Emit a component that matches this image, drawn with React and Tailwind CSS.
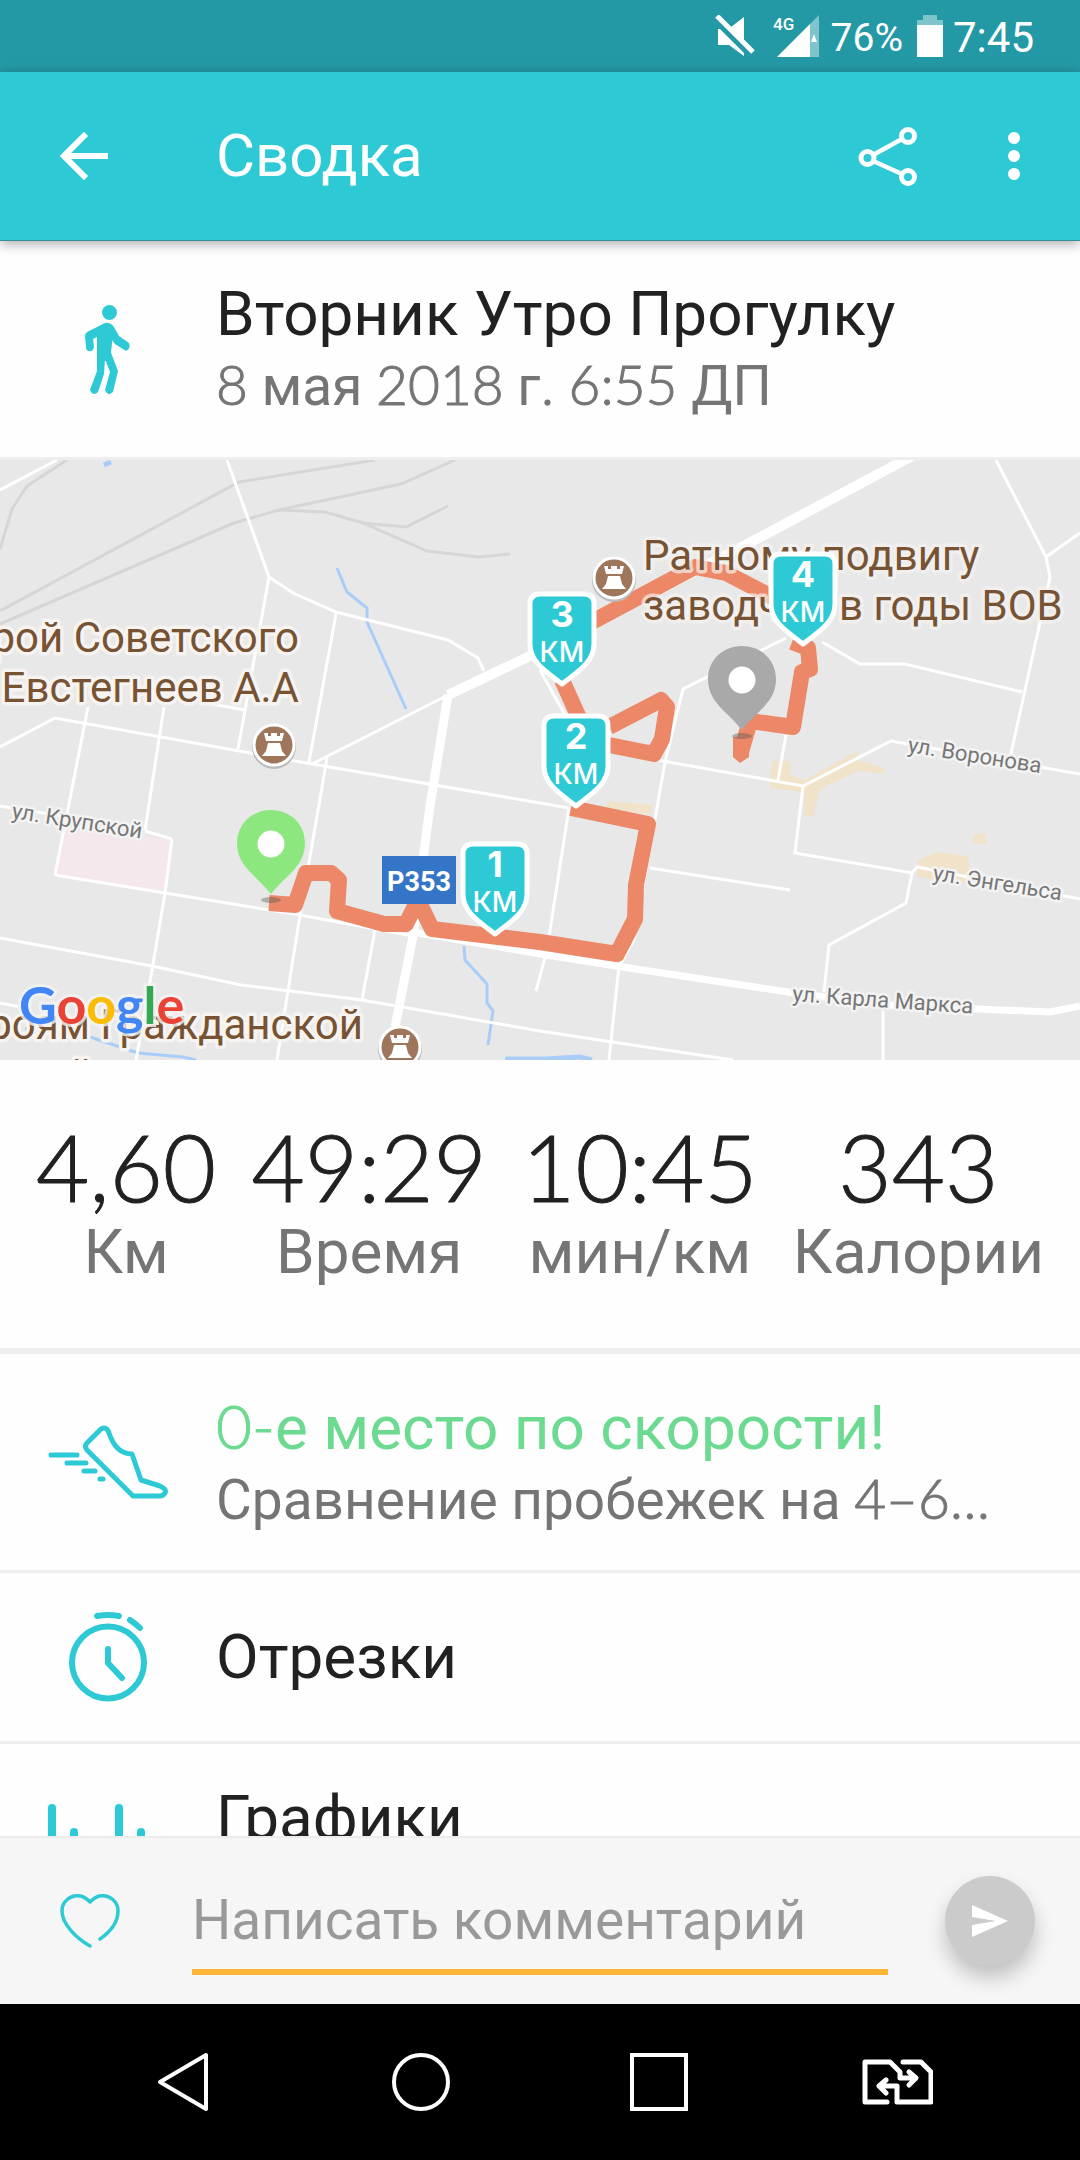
import React from "react";

const TEAL = "#2dcad6";

function StatusBar() {
  return (
    <div className="flex h-[72px] shrink-0 items-center justify-end bg-[#2499a6] pr-[46px] text-white">
      <svg className="mr-[16px] h-[42px] w-[42px]" viewBox="0 0 42 42" fill="#fff" aria-label="Звук выключен">
        <path d="M3 14L3 30H14L29 41V38L5 14Z" />
        <path d="M16 12L29 2V26Z" />
        <path d="M2 1L38 37" stroke="#fff" strokeWidth="5" fill="none" />
      </svg>
      <svg className="mr-3 h-[44px] w-[46px]" viewBox="0 0 46 44" fill="#fff" aria-label="Сигнал 4G">
        <text x="0" y="16" fontFamily="Roboto, sans-serif" fontSize="17" fontWeight="500">4G</text>
        <path d="M46 1V43H37V10Z" opacity=".42" />
        <path d="M4 43L37 10V43Z" />
        <path d="M38 28L41 20L44 28Z" />
      </svg>
      <span className="mr-[14px] mt-1 text-[39px] leading-none">76%</span>
      <svg className="mr-[10px] h-[42px] w-[26px]" viewBox="0 0 26 42" fill="#fff" aria-label="Батарея">
        <path d="M6 0H20V5H26V10H0V5H6Z" opacity=".42" />
        <path d="M0 10H26V42H0Z" />
      </svg>
      <span className="mt-1 text-[42px] leading-none">7:45</span>
    </div>
  );
}

function AppBar() {
  return (
    <header className="relative z-10 flex h-[169px] shrink-0 items-center border-b border-[#348f97] bg-[#2dcad6] text-white shadow-[0_3px_12px_rgba(0,0,0,0.32)]">
      <button aria-label="Назад" className="ml-[60px] mr-[108px]">
        <svg className="h-12 w-12" viewBox="0 0 48 48" fill="none" stroke="#fff" strokeWidth="6">
          <path d="M26 2L4 24L26 46M4 24H48" />
        </svg>
      </button>
      <h1 className="flex-1 text-[60px] leading-none">Сводка</h1>
      <button aria-label="Поделиться" className="mr-[84px]">
        <svg className="h-[60px] w-[60px]" viewBox="0 0 60 60" fill="none" stroke="#fff" strokeWidth="5">
          <circle cx="9.500" cy="32" r="6.500" />
          <circle cx="50" cy="10" r="6.500" />
          <circle cx="50" cy="51" r="6.500" />
          <path d="M15 29L44 13M15 35L44 48" strokeWidth="4.500" />
        </svg>
      </button>
      <button aria-label="Ещё" className="mr-[54px]">
        <svg className="h-[48px] w-6" viewBox="0 0 24 48" fill="#fff">
          <circle cx="12" cy="6" r="6" />
          <circle cx="12" cy="24" r="6" />
          <circle cx="12" cy="42" r="6" />
        </svg>
      </button>
    </header>
  );
}

function Num({ children }) {
  return (
    <span className="font-['Lato',sans-serif] font-light [-webkit-text-stroke:1px_currentColor]">
      {children}
    </span>
  );
}

function IconCell({ children }) {
  return <div className="flex w-[216px] shrink-0 items-center justify-center">{children}</div>;
}

const MARKERS = [
  { n: 3, x: 562, y: 132 },
  { n: 2, x: 576, y: 254 },
  { n: 1, x: 495, y: 382 },
  { n: 4, x: 803, y: 92 },
];

function KmMarker({ n, x, y }) {
  return (
    <g transform={`translate(${x} ${y})`}>
      <path
        d="M-22 2H22Q32 2 32 12V52C32 72 12 82 0 92C-12 82 -32 72 -32 52V12Q-32 2 -22 2Z"
        fill={TEAL}
        stroke="#fff"
        strokeWidth="5"
        strokeLinejoin="round"
      />
      <g fill="#fff" textAnchor="middle" fontFamily="Inter, sans-serif">
        <text x="0" y="35" fontSize="36" fontWeight="700">{n}</text>
        <text x="0" y="70" fontSize="28" fontWeight="500">КМ</text>
      </g>
    </g>
  );
}

function Castle({ x, y }) {
  return (
    <g transform={`translate(${x} ${y})`}>
      <circle cy="2" r="22" fill="#bbb" />
      <circle r="20" fill="#9d765b" stroke="#fff" strokeWidth="3" />
      <path
        d="M-10 -12H-6V-9H-3V-12H3V-9H6V-12H10L8 -4H-8ZM-6 -2H6L8 6L12 11H-12L-8 6Z"
        fill="#fff"
      />
    </g>
  );
}

function Pin({ x, y, color }) {
  return (
    <g transform={`translate(${x} ${y})`}>
      <ellipse cy="56" rx="10" ry="3" fill="#555" opacity=".4" />
      <path d="M0 -34C20 -34 34 -19 34 -1C34 22 16 30 0 50C-16 30 -34 22 -34 -1C-34 -19 -20 -34 0 -34Z" fill={color} />
      <circle r="13.500" fill="#fff" />
    </g>
  );
}

function RouteMap() {
  return (
    <svg className="block h-auto w-full shrink-0" viewBox="0 0 1080 600" role="img" aria-label="Карта маршрута">
      <rect width="1080" height="600" fill="#e8e8e8" />
      <path d="M62 368L172 379L165 431L55 415Z" fill="#f5e8ec" />
      <g fill="#f0e3ca">
        <path d="M772 301H790V315L805 320L846 297L857 291V300L884 308V314L858 311L820 329L814 356H804V332L770 328Z" />
        <path d="M607 341L652 345V354L605 349Z" />
        <path d="M918 400L937 392L968 396L971 416L964 423L917 417Z" />
        <rect x="973" y="374" width="13" height="10" />
      </g>
      <g fill="none" stroke="#d6d6d6" strokeWidth="3">
        <path d="M0 89L12 49L27 26L67 0" />
        <path d="M0 151L239 22L375 0" />
        <path d="M0 164L234 63L279 50L401 24L455 0" />
        <path d="M279 50L325 52L363 63L427 91L479 97L510 94" />
        <path d="M363 63L406 67L448 46" />
      </g>
      <g fill="none" stroke="#a9cdf9" strokeWidth="3">
        <path d="M337 108L347 132L367 148V162L406 249" />
        <path d="M464 486L465 500L487 524V543L493 551L488 585" />
        <path d="M25 569L90 577L138 593L183 597L196 600" />
        <path d="M505 599H545L580 597L592 600M104 5L111 2" strokeWidth="5" />
      </g>
      <g fill="none" stroke="#fff" strokeWidth="3">
        <path d="M0 30L57 0" />
        <path d="M227 0L269 117L293 133L336 152L448 180L478 198L484 211" />
        <path d="M269 117L238 289M336 154L309 302" />
        <path d="M0 287L55 258L312 304L540 343L569 348L547 490L536 531" />
        <path d="M312 304L448 235" />
        <path d="M88 247L55 415M164 247L145 370M207 243L245 250" />
        <path d="M0 346L62 356M145 371L172 379" />
        <path d="M55 415L165 433L300 455L413 476" />
        <path d="M172 379L165 433L150 522L136 600" />
        <path d="M327 298L300 455L277 600" />
        <path d="M0 478L152 506L241 525L362 540L540 571L612 582L733 600" />
        <path d="M375 470L362 540M0 543L30 549" />
        <path d="M996 0L1046 97L1050 117L1010 298M1046 97L1080 73" />
        <path d="M822 182L860 204H905L1022 232" />
        <path d="M786 178L683 229L665 302L647 405L634 480L619 506L609 600" />
        <path d="M657 300L803 326L891 281L1080 314" />
        <path d="M786 275L778 320M803 326L795 393L912 413L917 407L1080 439" />
        <path d="M912 413L906 443L829 485L824 532" />
        <path d="M650 408L790 430M883 551V600M540 210L565 255" />
      </g>
      <g fill="none" stroke="#fff" strokeLinejoin="round">
        <path d="M448 235L530 196L740 88L912 -4" strokeWidth="10" />
        <path d="M448 235L430 346L413 476L395 567" strokeWidth="9" />
        <path d="M413 472L540 494L616 506L788 532L884 545L1050 552L1080 546" strokeWidth="7" />
      </g>
      <g fill="none" stroke="#ec8868" strokeWidth="16" strokeLinejoin="round">
        <path d="M269 443L295 445L306 413H331L339 420L337 451L384 464H406L418 440L432 469L540 482L617 494L635 459L636 425L648 364L571 348" />
        <path d="M609 285L654 294L662 279L667 247L661 240L609 267" />
        <path d="M580 260L562 220M590 163L695 107L726 113L774 138" />
        <path d="M792 182L808 188L810 209L802 212L793 267L750 261L741 292" />
      </g>
      <path d="M733 277H749L749 297L740 303L733 297Z" fill="#ec8868" />

      <Castle x={274} y={285} />
      <Castle x={614} y={118} />
      <Castle x={400} y={587} />

      <g
        fill="#775334"
        stroke="#f6f3f0"
        strokeWidth="7"
        strokeLinejoin="round"
        paintOrder="stroke"
        fontFamily="Roboto, sans-serif"
        fontSize="42"
      >
        <g textAnchor="end">
          <text x="299" y="192">Герой Советского</text>
          <text x="299" y="242">Евстегнеев А.А</text>
          <text x="363" y="579">Героям Гражданской</text>
          <text x="150" y="629">войны</text>
        </g>
        <text x="643" y="110" strokeOpacity=".7">Ратному подвигу</text>
        <text x="643" y="160" strokeOpacity=".7">заводчан в годы ВОВ</text>
      </g>

      <g
        fill="#767676"
        stroke="#f3f3f3"
        strokeWidth="5"
        strokeLinejoin="round"
        paintOrder="stroke"
        fontFamily="Roboto, sans-serif"
        fontSize="22"
      >
        <text transform="translate(11 358) rotate(9)">ул. Крупской</text>
        <text transform="translate(907 292) rotate(9)">ул. Воронова</text>
        <text transform="translate(932 420) rotate(9)">ул. Энгельса</text>
        <text transform="translate(792 541) rotate(4)">ул. Карла Маркса</text>
      </g>

      <rect x="382" y="396" width="74" height="48" fill="#3475c7" />
      <text x="419" y="431" textAnchor="middle" fill="#fff" fontFamily="Roboto, sans-serif" fontSize="27" fontWeight="700">Р353</text>

      <Pin x={271} y={384} color="#8ce77f" />
      <Pin x={742} y={220} color="#a9a9a9" />
      {MARKERS.map((m) => (
        <KmMarker key={m.n} {...m} />
      ))}

      <text
        x="19"
        y="564"
        fontFamily="Lato, sans-serif"
        fontSize="52"
        fontWeight="700"
        stroke="#f3f3f3"
        strokeWidth="6"
        strokeOpacity=".8"
        paintOrder="stroke"
      >
        <tspan fill="#4285f4">G</tspan>
        <tspan fill="#ea4335">o</tspan>
        <tspan fill="#fbbc05">o</tspan>
        <tspan fill="#4285f4">g</tspan>
        <tspan fill="#34a853">l</tspan>
        <tspan fill="#ea4335">e</tspan>
      </text>
    </svg>
  );
}

const STATS = [
  ["4,60", "Км"],
  ["49:29", "Время"],
  ["10:45", "мин/км"],
  ["343", "Калории"],
];

function WalkIcon() {
  return (
    <svg className="h-[90px] w-[46px]" viewBox="0 0 46 90" fill={TEAL} aria-hidden="true">
      <circle cx="24.500" cy="7.500" r="7.500" />
      <path d="M13 32L18 22L28 30L25 56H12Z" />
      <path d="M20 18Q25 17 29 22L34 31L44 38Q46 44 41 46L30 39L27 35L25 45L33 66L28 87Q23 92 20 85L25 67L20 54L19 69L13 87Q8 92 5 85L12 66V32L8 34L9 42Q8 47 4 46Q1 46 1 42L0 31Q0 28 4 26Z" />
    </svg>
  );
}

function ShoeIcon() {
  return (
    <svg className="h-[74px] w-[120px]" viewBox="0 0 120 74" fill="none" stroke={TEAL} strokeWidth="5" strokeLinecap="round" strokeLinejoin="round" aria-hidden="true">
      <path d="M53 4Q59 1 61 8C65 20 72 29 84 29L93 55L112 61Q119 64 117 68Q115 71 112 71H85L39 25Q36 21 39 18Z" />
      <path d="M3 30H29M19 38H38M36 46H47M52 54H55" />
    </svg>
  );
}

function StopwatchIcon() {
  return (
    <svg className="h-[92px] w-[78px]" viewBox="0 0 78 92" fill="none" stroke={TEAL} strokeWidth="6" strokeLinecap="round" strokeLinejoin="round" aria-hidden="true">
      <circle cx="39" cy="51.500" r="36" />
      <path d="M28 5Q39 3 50 5M61 9Q67 13 71 17M39 38V52L53 67" />
    </svg>
  );
}

function ChartIcon() {
  return (
    <svg className="h-[72px] w-[120px]" viewBox="0 0 120 72" fill="none" stroke={TEAL} strokeWidth="8" strokeLinecap="round" aria-hidden="true">
      <path d="M4 26V68M26 50V68M48 58V68M71 26V68M93 50V68M115 58V68" />
    </svg>
  );
}

function CommentBar() {
  return (
    <form className="flex h-[168px] shrink-0 items-center border-t-2 border-[#ececec] bg-[#f6f6f6]" onSubmit={(e) => e.preventDefault()}>
      <button type="button" aria-label="Нравится" className="ml-[60px] mr-[72px]">
        <svg className="h-[54px] w-[60px]" viewBox="0 0 60 54" fill="none" stroke={TEAL} strokeWidth="3.500" strokeLinecap="round" strokeLinejoin="round">
          <path d="M30 52C16 44 2 30 2 17C2 3 19 -4 30 8C41 -4 58 3 58 17C58 28 50 38 40 45" />
        </svg>
      </button>
      <input
        type="text"
        aria-label="Написать комментарий"
        placeholder="Написать комментарий"
        className="h-[108px] min-w-0 flex-1 border-b-[6px] border-[#fdb535] bg-transparent p-0 pt-1 text-[55px] text-[#222] outline-none placeholder:text-[#999]"
      />
      <button type="submit" aria-label="Отправить" className="ml-[57px] mr-[45px] flex h-[90px] w-[90px] items-center justify-center rounded-full bg-[#cbcbcb] shadow-[0_12px_20px_rgba(0,0,0,0.22)]">
        <svg className="h-8 w-9" viewBox="0 0 36 32" fill="#fff">
          <path d="M0 0L36 16L0 32V20L24 16L0 12Z" />
        </svg>
      </button>
    </form>
  );
}

function NavBar() {
  return (
    <nav className="grid h-[156px] shrink-0 grid-cols-4 items-center justify-items-center bg-black px-16">
      <button aria-label="Назад">
        <svg className="h-[60px] w-[52px]" viewBox="0 0 52 60" fill="none" stroke="#fff" strokeWidth="4" strokeLinejoin="round">
          <path d="M49 3V57L3 30Z" />
        </svg>
      </button>
      <button aria-label="Домой">
        <span className="block h-[58px] w-[58px] rounded-full border-4 border-white" />
      </button>
      <button aria-label="Недавние">
        <span className="block h-[58px] w-[58px] border-4 border-white" />
      </button>
      <button aria-label="Смена SIM-карты">
        <svg className="h-[48px] w-[72px]" viewBox="0 0 72 48" fill="none" stroke="#fff" strokeWidth="5" strokeLinecap="round" strokeLinejoin="round">
          <path d="M26 44H4V4H29L39 14V20H54M48 14L55 20L48 27" />
          <path d="M42 4H60L70 14V44H36V28H19M25 22L18 28L25 35" />
        </svg>
      </button>
    </nav>
  );
}

export default function App() {
  return (
    <div className="flex h-screen flex-col overflow-hidden bg-white font-['Roboto',sans-serif] text-[#212121]">
      <StatusBar />
      <AppBar />
      <main className="flex min-h-0 flex-1 flex-col overflow-hidden bg-[#fefefe]">
        <section className="flex h-[219px] shrink-0 items-center border-b-[3px] border-[#eeeeee] pt-[2px]">
          <IconCell><WalkIcon /></IconCell>
          <div className="min-w-0 flex-1 whitespace-nowrap">
            <h2 className="text-[62px] leading-[70px]">Вторник Утро Прогулку</h2>
            <p className="text-[55px] leading-[70px] text-[#757575]">
              <Num>8</Num> мая <Num>2018</Num> г. <Num>6:55</Num> ДП
            </p>
          </div>
        </section>

        <RouteMap />

        <section className="flex h-[294px] shrink-0 justify-between border-b-[6px] border-[#eeeeee] px-9 pt-[58px] text-center">
          {STATS.map(([value, label]) => (
            <div key={label}>
              <div className="font-['Lato',sans-serif] text-[92px] leading-[98px]">
                <Num>{value}</Num>
              </div>
              <div className="text-[62px] leading-[72px] text-[#757575]">{label}</div>
            </div>
          ))}
        </section>

        <a href="#compare" className="flex h-[219px] shrink-0 items-center border-b-[3px] border-[#eeeeee]">
          <IconCell><ShoeIcon /></IconCell>
          <div className="min-w-0 flex-1 pr-[64px]">
            <div className="whitespace-nowrap text-[62px] leading-[70px] text-[#6cda90]">
              <Num>0-</Num>е место по скорости!
            </div>
            <div className="truncate text-[55px] leading-[70px] text-[#757575]">
              Сравнение пробежек на <Num>4–6…</Num>
            </div>
          </div>
        </a>
        <a href="#splits" className="flex h-[171px] shrink-0 items-center border-b-[3px] border-[#eeeeee]">
          <IconCell><StopwatchIcon /></IconCell>
          <span className="text-[62px] leading-[70px]">Отрезки</span>
        </a>
        <a href="#charts" className="flex h-[148px] shrink-0 items-center">
          <IconCell><ChartIcon /></IconCell>
          <span className="text-[62px] leading-[70px]">Графики</span>
        </a>
      </main>
      <CommentBar />
      <NavBar />
    </div>
  );
}
